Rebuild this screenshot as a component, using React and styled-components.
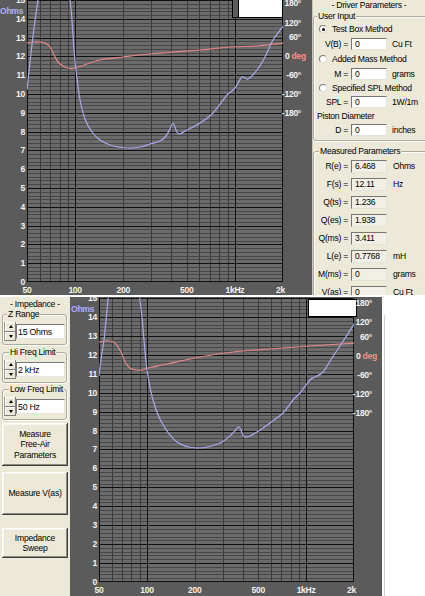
import React from "react";
import styled, { createGlobalStyle } from "styled-components";

const FONT = `"Liberation Sans", Arial, sans-serif`;

const GlobalStyle = createGlobalStyle`
  html, body { margin: 0; padding: 0; background: #ffffff; }
  body { font-family: ${FONT}; }
`;

const Page = styled.div`
  width: 425px;
  height: 596px;
  overflow: hidden;
  background: #ffffff;
  display: flex;
  flex-direction: column;
  font-family: ${FONT};
  font-size: 8.6px;
  letter-spacing: -0.25px;
  color: #000;
`;

const TopSection = styled.section`
  display: flex;
  height: 295px;
  flex: none;
`;

const Gap = styled.div`
  height: 2px;
  flex: none;
  background: #ffffff;
`;

const BottomSection = styled.section`
  display: flex;
  height: 299px;
  flex: none;
`;

/* ---------------- Chart ---------------- */

const ChartFrame = styled.div`
  width: 312px;
  height: 100%;
  flex: none;
  background: #5b5b5b;
  overflow: hidden;
`;

const ChartSvg = styled.svg`
  display: block;
  text {
    font-family: ${FONT};
    font-weight: 700;
    font-size: 8.6px;
    letter-spacing: -0.3px;
    fill: #f2f2f2;
  }
  .ohms { fill: #aeb0ff; }
  .deg { fill: #ff8c8c; }
`;

const MINOR_F = [60, 70, 80, 90, 200, 300, 400, 500, 600, 700, 800, 900];
const MAJOR_F = [100, 1000];
const X_LABELS = [
  { f: 50, t: "50" },
  { f: 100, t: "100" },
  { f: 200, t: "200" },
  { f: 500, t: "500" },
  { f: 1000, t: "1kHz" },
];
const PHASE = ["180°", "120°", "60°", null, "-60°", "-120°", "-180°"];

function smooth(pts) {
  let d = `M${pts[0][0]},${pts[0][1]}`;
  for (let i = 0; i < pts.length - 1; i++) {
    const p0 = pts[i - 1] || pts[i];
    const p1 = pts[i];
    const p2 = pts[i + 1];
    const p3 = pts[i + 2] || p2;
    const c1x = p1[0] + (p2[0] - p0[0]) / 6;
    const c1y = p1[1] + (p2[1] - p0[1]) / 6;
    const c2x = p2[0] - (p3[0] - p1[0]) / 6;
    const c2y = p2[1] - (p3[1] - p1[1]) / 6;
    d += ` C${c1x.toFixed(2)},${c1y.toFixed(2)} ${c2x.toFixed(2)},${c2y.toFixed(2)} ${p2[0]},${p2[1]}`;
  }
  return d;
}

function Chart({ id, w, h, plot, blue, red, boxes, phaseY, ohmsX }) {
  const { x: px, y: py, w: pw, h: ph } = plot;
  const step = ph / 15;
  const dec = pw / Math.log10(40);
  const fx = (f) => px + Math.log10(f / 50) * dec;
  const oy = (v) => py + ph - v * step;
  const snap = (v) => Math.round(v) + 0.5;
  const right = px + pw;
  const bottom = py + ph;
  const minorH = [];
  for (let i = 1; i < 75; i++) if (i % 5) minorH.push(oy(i / 5));
  const majorH = [];
  for (let n = 1; n < 15; n++) majorH.push(oy(n));

  return (
    <ChartFrame>
      <ChartSvg width={w} height={h} viewBox={`0 0 ${w} ${h}`}>
        <defs>
          <clipPath id={id}>
            <rect x={px} y={py} width={pw} height={ph} />
          </clipPath>
        </defs>
        <rect x={px} y={py} width={pw} height={ph} fill="#6b6b6b" />
        <g shapeRendering="crispEdges" strokeWidth="1">
          {minorH.map((y, i) => (
            <line key={"mh" + i} x1={px} x2={right} y1={snap(y)} y2={snap(y)} stroke="#474747" />
          ))}
          {MINOR_F.map((f) => (
            <line key={"mv" + f} x1={snap(fx(f))} x2={snap(fx(f))} y1={py} y2={bottom} stroke="#3c3c3c" />
          ))}
          {majorH.map((y, i) => (
            <line key={"Mh" + i} x1={px} x2={right} y1={snap(y)} y2={snap(y)} stroke="#101010" />
          ))}
          {MAJOR_F.map((f) => (
            <line key={"Mv" + f} x1={snap(fx(f))} x2={snap(fx(f))} y1={py} y2={bottom} stroke="#101010" />
          ))}
          <rect x={px + 0.5} y={py + 0.5} width={pw - 1} height={ph - 1} fill="none" stroke="#101010" />
        </g>
        <g clipPath={`url(#${id})`} fill="none" strokeWidth="1.2" strokeLinejoin="round">
          <path d={smooth(red)} stroke="#e48686" />
          {blue.map((b, i) => (
            <path key={i} d={smooth(b)} stroke="#a8a8ec" />
          ))}
        </g>
        {boxes.map((b, i) => (
          <rect
            key={"b" + i}
            x={b.x + 0.5}
            y={b.y + 0.5}
            width={b.w}
            height={b.h}
            fill={b.fill}
            stroke="#000"
            shapeRendering="crispEdges"
          />
        ))}
        {Array.from({ length: 16 }, (_, n) => (
          <text key={"o" + n} x={px - 2} y={oy(n)} textAnchor="end" dominantBaseline="central">
            {n}
          </text>
        ))}
        <text className="ohms" x={ohmsX} y={py + 11} dominantBaseline="central">
          Ohms
        </text>
        {X_LABELS.map((l) => (
          <text key={l.t} x={fx(l.f)} y={bottom + 8} textAnchor="middle" dominantBaseline="central">
            {l.t}
          </text>
        ))}
        <text x={right + 2} y={bottom + 8} textAnchor="end" dominantBaseline="central">
          2k
        </text>
        {PHASE.map((t, i) =>
          t ? (
            <text key={"p" + i} x={right + 18} y={phaseY[i]} textAnchor="end" dominantBaseline="central">
              {t}
            </text>
          ) : (
            <text key={"p" + i} x={right + 2} y={phaseY[i]} dominantBaseline="central">
              0 <tspan className="deg">deg</tspan>
            </text>
          )
        )}
      </ChartSvg>
    </ChartFrame>
  );
}

const TOP_CHART = {
  id: "clipTop",
  w: 312,
  h: 295,
  ohmsX: 0,
  plot: { x: 27, y: 0, w: 256, h: 282 },
  blue: [
    [[27, 90], [30, 62], [34, 28], [38, 0], [39, -6]],
    [
      [68, -6], [70, 0], [72, 20], [74, 50], [76, 70], [78, 86], [80, 100], [85, 119],
      [92, 132], [100, 140], [113, 146], [127, 148], [140, 147], [150, 144], [160, 141],
      [166, 136], [170, 129], [173, 123], [176, 130], [179, 134], [187, 130], [200, 123],
      [213, 113], [227, 95], [235, 88], [242, 77], [248, 79], [257, 70], [265, 57],
      [273, 40], [284, 25],
    ],
  ],
  red: [
    [27, 43], [33, 42], [40, 42], [45, 43], [50, 47], [54, 55], [58, 62], [63, 66],
    [68, 68], [75, 68], [87, 64], [100, 60], [123, 57], [150, 54], [200, 50], [230, 47],
    [257, 46], [284, 43],
  ],
  boxes: [
    { x: 232, y: -1, w: 49, h: 18, fill: "#5b5b5b" },
    { x: 238, y: -1, w: 44, h: 18, fill: "#ffffff" },
  ],
  phaseY: [3, 23, 37, 56, 75, 94, 113],
};

const BOTTOM_CHART = {
  id: "clipBottom",
  w: 312,
  h: 299,
  ohmsX: 1,
  plot: { x: 29, y: 1, w: 255, h: 284 },
  blue: [
    [[29, 79], [31, 62], [34, 43], [38, 3], [39, -5]],
    [
      [70, -5], [70, 3], [72, 20], [74, 43], [77, 73], [83, 103], [92, 126], [107, 145],
      [127, 151], [150, 146], [163, 136], [169, 130], [175, 140], [187, 135], [200, 126],
      [213, 116], [223, 103], [230, 96], [240, 83], [245, 80], [253, 75], [262, 61],
      [272, 46], [286, 24],
    ],
  ],
  red: [
    [29, 45], [35, 44], [40, 44], [45, 46], [48, 50], [52, 57], [55, 65], [60, 71],
    [66, 73], [72, 73], [78, 71], [97, 67], [130, 60], [163, 55], [200, 52], [240, 49],
    [286, 46],
  ],
  boxes: [{ x: 238, y: 2, w: 48, h: 17, fill: "#ffffff" }],
  phaseY: [6, 25, 40, 59, 78, 97, 116],
};

/* ---------------- Shared window controls ---------------- */

const PanelTitle = styled.div`
  height: 10px;
  line-height: 10px;
  padding-top: ${(p) => p.$pt || 0}px;
  text-align: center;
  white-space: nowrap;
`;

const GroupBox = styled.fieldset`
  margin: ${(p) => p.$mt || 0}px ${(p) => p.$mr || 0}px 0 ${(p) => p.$ml || 0}px;
  padding: 0 0 ${(p) => p.$pb || 0}px 0;
  border: 1px solid #aeab9c;
  border-radius: 3px;
  box-shadow: inset 1px 1px 0 #fbfaf6, 1px 1px 0 #fbfaf6;
  min-width: 0;
  width: ${(p) => (p.$w ? `${p.$w}px` : "auto")};
  box-sizing: border-box;
`;

const GroupLegend = styled.legend`
  margin-left: ${(p) => p.$ml}px;
  padding: 0 1px;
  height: 10px;
  line-height: 10px;
  white-space: nowrap;
  background: #ece9d8;
`;

const Rows = styled.div`
  display: flex;
  flex-direction: column;
  margin-top: ${(p) => p.$mt || 0}px;
`;

const RadioRow = styled.div`
  display: flex;
  align-items: center;
  gap: 5px;
  height: ${(p) => p.$h}px;
  padding-left: 5px;
  white-space: nowrap;
`;

const RadioCircle = styled.span`
  width: 8px;
  height: 8px;
  flex: none;
  box-sizing: border-box;
  border-radius: 50%;
  border: 1px solid;
  border-color: #7d7d7d #dcdcdc #dcdcdc #7d7d7d;
  background: #ffffff;
  display: flex;
  align-items: center;
  justify-content: center;
`;

const RadioDot = styled.span`
  width: 3px;
  height: 3px;
  border-radius: 50%;
  background: #111;
`;

const NoteRow = styled.div`
  display: flex;
  align-items: center;
  height: ${(p) => p.$h}px;
  padding-left: 3px;
  white-space: nowrap;
`;

const FieldRow = styled.div`
  display: flex;
  align-items: center;
  height: ${(p) => p.$h}px;
  white-space: nowrap;
`;

const FieldLabel = styled.span`
  width: 34px;
  flex: none;
  text-align: right;
  margin-right: 3px;
`;

const TextBox = styled.div`
  width: 36px;
  height: ${(p) => (p.$ro ? 13 : 12)}px;
  flex: none;
  box-sizing: border-box;
  padding-left: 3px;
  display: flex;
  align-items: center;
  background: ${(p) => (p.$ro ? "#f2f0e6" : "#ffffff")};
  border: 1px solid;
  border-color: #767676 #e6e4d8 #e6e4d8 #767676;
  margin-right: ${(p) => (p.$ro ? 6 : 5)}px;
`;

const Unit = styled.span`
  white-space: nowrap;
`;

/* ---------------- Driver parameters panel ---------------- */

const DriverPanel = styled.aside`
  flex: 1;
  min-width: 0;
  background: #ece9d8;
  border-left: 1px solid #c9c7bb;
  overflow: hidden;
`;

const USER_ROWS = [
  { kind: "radio", h: 14, checked: true, text: "Test Box Method" },
  { kind: "field", h: 15, label: "V(B) =", value: "0", unit: "Cu Ft" },
  { kind: "radio", h: 15, text: "Added Mass Method" },
  { kind: "field", h: 15, label: "M =", value: "0", unit: "grams" },
  { kind: "radio", h: 14, text: "Specified SPL Method" },
  { kind: "field", h: 14, label: "SPL =", value: "0", unit: "1W/1m" },
  { kind: "note", h: 14, text: "Piston Diameter" },
  { kind: "field", h: 13, label: "D =", value: "0", unit: "inches" },
];

const MEASURED = [
  { label: "R(e) =", value: "6.468", unit: "Ohms" },
  { label: "F(s) =", value: "12.11", unit: "Hz" },
  { label: "Q(ts) =", value: "1.236", unit: "" },
  { label: "Q(es) =", value: "1.938", unit: "" },
  { label: "Q(ms) =", value: "3.411", unit: "" },
  { label: "L(e) =", value: "0.7768", unit: "mH" },
  { label: "M(ms) =", value: "0", unit: "grams" },
  { label: "V(as) =", value: "0", unit: "Cu Ft" },
];

function UserRow({ row }) {
  if (row.kind === "radio") {
    return (
      <RadioRow $h={row.h}>
        <RadioCircle>{row.checked && <RadioDot />}</RadioCircle>
        {row.text}
      </RadioRow>
    );
  }
  if (row.kind === "note") {
    return <NoteRow $h={row.h}>{row.text}</NoteRow>;
  }
  return (
    <FieldRow $h={row.h}>
      <FieldLabel>{row.label}</FieldLabel>
      <TextBox>{row.value}</TextBox>
      <Unit>{row.unit}</Unit>
    </FieldRow>
  );
}

function DriverParameters() {
  return (
    <DriverPanel>
      <PanelTitle>- Driver Parameters -</PanelTitle>
      <GroupBox $mt={1} $mr={-6} $pb={4}>
        <GroupLegend $ml={3}>User Input</GroupLegend>
        <Rows $mt={1}>
          {USER_ROWS.map((r, i) => (
            <UserRow key={i} row={r} />
          ))}
        </Rows>
      </GroupBox>
      <GroupBox $mt={5} $mr={-6}>
        <GroupLegend $ml={5}>Measured Parameters</GroupLegend>
        <Rows $mt={1}>
          {MEASURED.map((m) => (
            <FieldRow key={m.label} $h={18}>
              <FieldLabel>{m.label}</FieldLabel>
              <TextBox $ro>{m.value}</TextBox>
              <Unit>{m.unit}</Unit>
            </FieldRow>
          ))}
        </Rows>
      </GroupBox>
    </DriverPanel>
  );
}

/* ---------------- Impedance panel ---------------- */

const ImpedancePanel = styled.aside`
  width: 70px;
  flex: none;
  background: #ece9d8;
  display: flex;
  flex-direction: column;
  overflow: hidden;
`;

const SpinRow = styled.div`
  display: flex;
  align-items: center;
  height: 19px;
  margin: 3px 0 0 1px;
`;

const Spinner = styled.div`
  width: 12px;
  height: 19px;
  flex: none;
  display: flex;
  flex-direction: column;
  box-sizing: border-box;
  border-left: 1px solid #9d9b90;
`;

const SpinButton = styled.div`
  flex: 1;
  display: flex;
  align-items: center;
  justify-content: center;
  background: #ece9d8;
  box-shadow: inset -1px -1px 0 #7f7f7f, inset 1px 1px 0 #ffffff;
`;

const SpinArrow = styled.span`
  width: 0;
  height: 0;
  border-left: 2.5px solid transparent;
  border-right: 2.5px solid transparent;
  ${(p) => (p.$down ? "border-top: 3px solid #000;" : "border-bottom: 3px solid #000;")}
`;

const SpinField = styled.div`
  width: 49px;
  height: 15px;
  flex: none;
  box-sizing: border-box;
  padding-left: 1px;
  display: flex;
  align-items: center;
  background: #ffffff;
  border: 1px solid;
  border-color: #767676 #e6e4d8 #e6e4d8 #767676;
  font-size: 8.8px;
  white-space: nowrap;
`;

const PanelButton = styled.button`
  width: 66px;
  height: ${(p) => p.$h}px;
  margin: ${(p) => p.$mt}px 0 0 2px;
  padding: 0;
  flex: none;
  border: none;
  background: #ece9d8;
  box-shadow: inset -1px -1px 0 #404040, inset 1px 1px 0 #ffffff,
    inset -2px -2px 0 #8a8a80, inset 2px 2px 0 #f6f5ef;
  font-family: ${FONT};
  font-size: 8.6px;
  line-height: 10.5px;
  letter-spacing: -0.25px;
  color: #000;
  text-align: center;
  white-space: pre-line;
`;

const RANGES = [
  { title: "Z Range", value: "15 Ohms", mt: 0, ml: 4 },
  { title: "Hi Freq Limit", value: "2 kHz", mt: 2, ml: 6 },
  { title: "Low Freq Limit", value: "50 Hz", mt: 1, ml: 6 },
];

const BUTTONS = [
  { text: "Measure\nFree-Air\nParameters", h: 43, mt: 3 },
  { text: "Measure V(as)", h: 43, mt: 6 },
  { text: "Impedance\nSweep", h: 30, mt: 13 },
];

function ImpedanceControls() {
  return (
    <ImpedancePanel>
      <PanelTitle $pt={2}>- Impedance -</PanelTitle>
      {RANGES.map((r) => (
        <GroupBox key={r.title} $mt={r.mt} $ml={2} $w={65} $pb={3}>
          <GroupLegend $ml={r.ml}>{r.title}</GroupLegend>
          <SpinRow>
            <Spinner>
              <SpinButton>
                <SpinArrow />
              </SpinButton>
              <SpinButton>
                <SpinArrow $down />
              </SpinButton>
            </Spinner>
            <SpinField>{r.value}</SpinField>
          </SpinRow>
        </GroupBox>
      ))}
      {BUTTONS.map((b) => (
        <PanelButton key={b.text} $h={b.h} $mt={b.mt}>
          {b.text}
        </PanelButton>
      ))}
    </ImpedancePanel>
  );
}

const SideBlank = styled.div`
  flex: 1;
  background: #ffffff;
  display: flex;
  padding: 18px 0 0 2px;
`;

const SideRule = styled.div`
  width: 1px;
  background: #cfcfcf;
`;

export default function App() {
  return (
    <>
      <GlobalStyle />
      <Page>
        <TopSection>
          <Chart {...TOP_CHART} />
          <DriverParameters />
        </TopSection>
        <Gap />
        <BottomSection>
          <ImpedanceControls />
          <Chart {...BOTTOM_CHART} />
          <SideBlank>
            <SideRule />
          </SideBlank>
        </BottomSection>
      </Page>
    </>
  );
}
